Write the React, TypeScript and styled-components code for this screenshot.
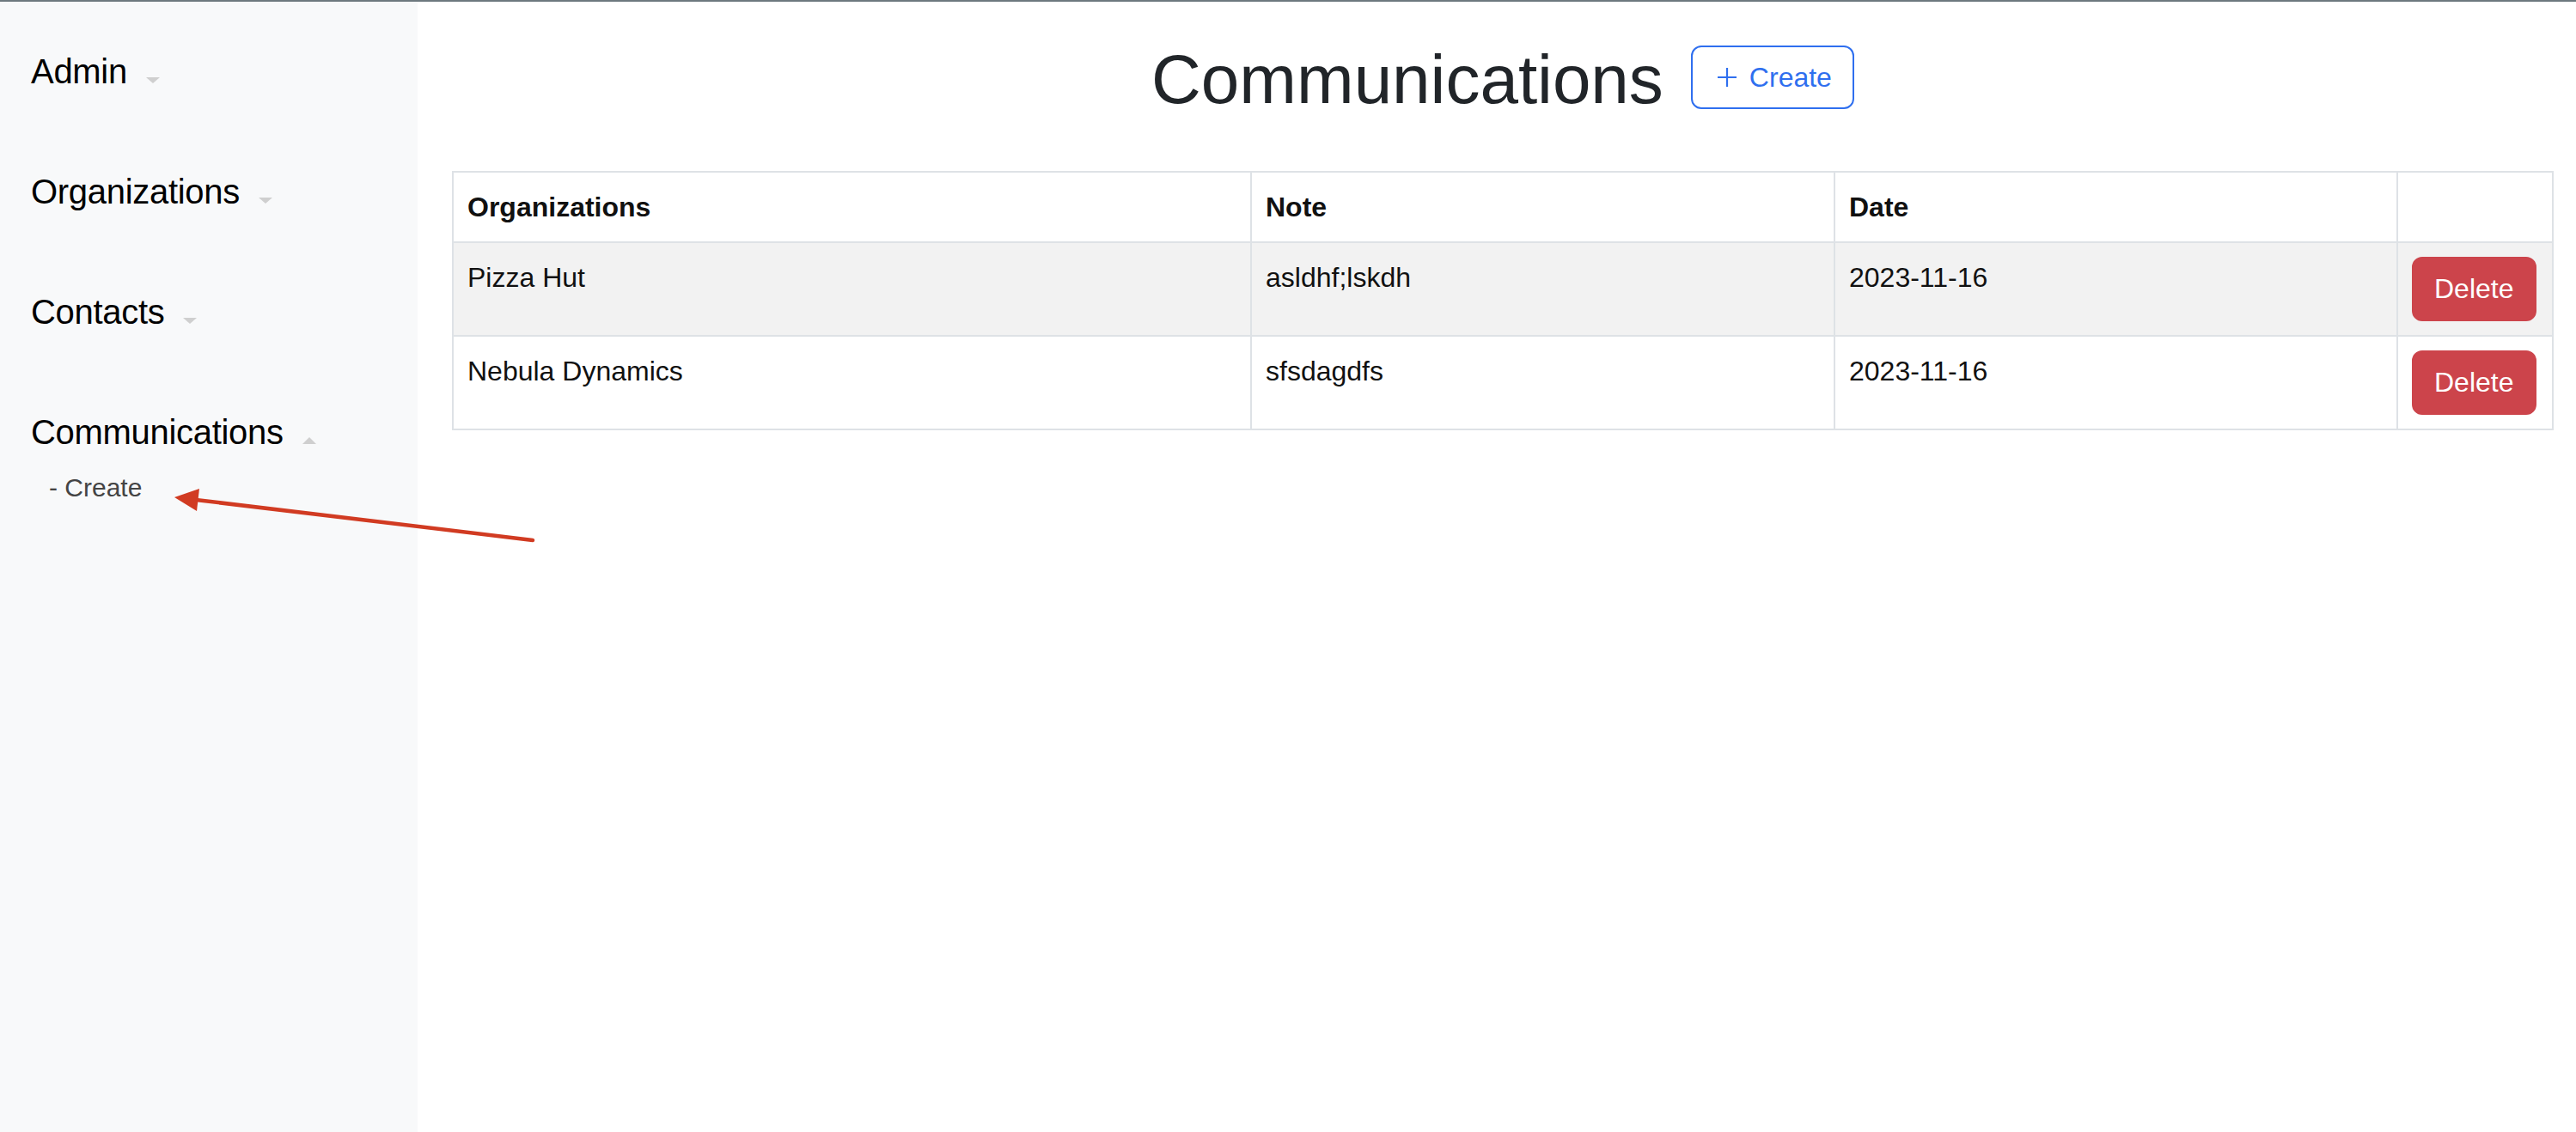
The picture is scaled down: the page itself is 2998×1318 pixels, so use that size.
import React from 'react';
import styled, { createGlobalStyle } from 'styled-components';

const GlobalStyle = createGlobalStyle`
  html, body {
    margin: 0;
    padding: 0;
    background: #ffffff;
    font-family: 'Liberation Sans', Arial, sans-serif;
  }
`;

interface Communication {
  id: number;
  organization: string;
  note: string;
  date: string;
}

const communications: Communication[] = [
  { id: 1, organization: 'Pizza Hut', note: 'asldhf;lskdh', date: '2023-11-16' },
  { id: 2, organization: 'Nebula Dynamics', note: 'sfsdagdfs', date: '2023-11-16' },
];

const navItems = [
  { label: 'Admin', open: false },
  { label: 'Organizations', open: false },
  { label: 'Contacts', open: false },
  { label: 'Communications', open: true, children: ['Create'] },
];

const App = () => {
  return (
    <Page>
      <GlobalStyle />
      <Sidebar>
        {navItems.map((item) => (
          <NavGroup key={item.label}>
            <NavTitle>
              {item.label}
              <Caret $up={item.open} />
            </NavTitle>
            {item.open &&
              item.children?.map((child) => (
                <SubLink key={child}>- {child}</SubLink>
              ))}
          </NavGroup>
        ))}
      </Sidebar>

      <Main>
        <Header>
          <Title>Communications</Title>
          <CreateButton>
            <svg width="24" height="24" viewBox="0 0 24 24" fill="none">
              <path d="M12 1v22M1 12h22" stroke="currentColor" strokeWidth="2.2" />
            </svg>
            Create
          </CreateButton>
        </Header>

        <Table>
          <colgroup>
            <col style={{ width: 929 }} />
            <col style={{ width: 679 }} />
            <col style={{ width: 655 }} />
            <col style={{ width: 181 }} />
          </colgroup>
          <thead>
            <tr>
              <Th>Organizations</Th>
              <Th>Note</Th>
              <Th>Date</Th>
              <Th />
            </tr>
          </thead>
          <tbody>
            {communications.map((c, i) => (
              <Row key={c.id} $striped={i % 2 === 0}>
                <Td>{c.organization}</Td>
                <Td>{c.note}</Td>
                <Td>{c.date}</Td>
                <Td>
                  <DeleteButton>Delete</DeleteButton>
                </Td>
              </Row>
            ))}
          </tbody>
        </Table>
      </Main>

      <Arrow width="700" height="700" viewBox="0 0 700 700">
        <line x1="620" y1="627" x2="228" y2="580" stroke="#d13b22" strokeWidth="4.5" strokeLinecap="round" />
        <polygon points="203,577 232,567 229,593" fill="#d13b22" />
      </Arrow>
    </Page>
  );
};

export default App;

const Page = styled.div`
  position: relative;
  display: flex;
  min-height: 100vh;
  box-sizing: border-box;
  border-top: 2px solid #6d787e;
`;

const Sidebar = styled.nav`
  width: 486px;
  flex-shrink: 0;
  background: #f8f9fa;
  padding: 57px 0 0 36px;
  box-sizing: border-box;
`;

const NavGroup = styled.div`
  margin-bottom: 92px;
`;

const NavTitle = styled.div`
  font-size: 40px;
  line-height: 48px;
  letter-spacing: -0.3px;
  color: #000;
`;

const Caret = styled.span<{ $up: boolean }>`
  display: inline-block;
  width: 0;
  height: 0;
  margin-left: 22px;
  border-left: 8px solid transparent;
  border-right: 8px solid transparent;
  ${({ $up }) =>
    $up ? 'border-bottom: 8px solid #cfcfcf;' : 'border-top: 7px solid #cfcfcf;'}
`;

const SubLink = styled.div`
  margin-top: 23px;
  padding-left: 21px;
  font-size: 30px;
  line-height: 36px;
  color: #444;
`;

const Main = styled.main`
  flex: 1;
  padding: 43px 28px 0 40px;
  box-sizing: border-box;
`;

const Header = styled.div`
  display: flex;
  justify-content: center;
  align-items: flex-start;
  gap: 32px;
  margin-bottom: 58px;
`;

const Title = styled.h1`
  margin: 0;
  font-size: 80px;
  line-height: 96px;
  font-weight: 400;
  color: #212529;
`;

const CreateButton = styled.button`
  display: flex;
  align-items: center;
  gap: 14px;
  height: 74px;
  margin-top: 8px;
  padding: 0 24px 0 28px;
  border: 2px solid #2f6fef;
  border-radius: 12px;
  background: #fff;
  color: #2f6fef;
  font-family: inherit;
  font-size: 32px;
  cursor: pointer;
`;

const Table = styled.table`
  width: 2444px;
  table-layout: fixed;
  border-collapse: collapse;
  border: 2px solid #dee2e6;
  color: #111;
  font-size: 32px;
  line-height: 48px;
`;

const Th = styled.th`
  text-align: left;
  font-weight: 700;
  padding: 16px;
  border: 2px solid #dee2e6;
  vertical-align: top;
`;

const Row = styled.tr<{ $striped: boolean }>`
  background: ${({ $striped }) => ($striped ? '#f2f2f2' : '#fff')};
`;

const Td = styled.td`
  padding: 16px;
  border: 2px solid #dee2e6;
  vertical-align: top;
`;

const DeleteButton = styled.button`
  display: block;
  height: 75px;
  padding: 0 24px;
  border: 2px solid #cc444b;
  border-radius: 12px;
  background: #cc444b;
  color: #fff;
  font-family: inherit;
  font-size: 32px;
  cursor: pointer;
`;

const Arrow = styled.svg`
  position: absolute;
  top: 0;
  left: 0;
  pointer-events: none;
`;
